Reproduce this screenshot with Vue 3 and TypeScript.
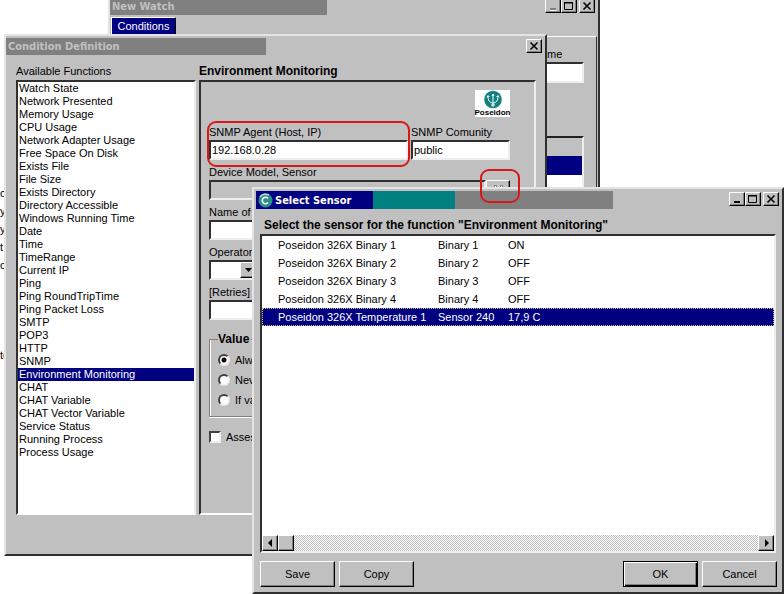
<script setup lang="ts">
import { ref } from 'vue'

interface Sensor {
  name: string
  short: string
  value: string
}

const functions: string[] = [
  'Watch State', 'Network Presented', 'Memory Usage', 'CPU Usage', 'Network Adapter Usage',
  'Free Space On Disk', 'Exists File', 'File Size', 'Exists Directory', 'Directory Accessible',
  'Windows Running Time', 'Date', 'Time', 'TimeRange', 'Current IP', 'Ping', 'Ping RoundTripTime',
  'Ping Packet Loss', 'SMTP', 'POP3', 'HTTP', 'SNMP', 'Environment Monitoring', 'CHAT',
  'CHAT Variable', 'CHAT Vector Variable', 'Service Status', 'Running Process', 'Process Usage',
]
const selectedFunction = ref('Environment Monitoring')

const sensors: Sensor[] = [
  { name: 'Poseidon 326X Binary 1', short: 'Binary 1', value: 'ON' },
  { name: 'Poseidon 326X Binary 2', short: 'Binary 2', value: 'OFF' },
  { name: 'Poseidon 326X Binary 3', short: 'Binary 3', value: 'OFF' },
  { name: 'Poseidon 326X Binary 4', short: 'Binary 4', value: 'OFF' },
  { name: 'Poseidon 326X Temperature 1', short: 'Sensor 240', value: '17,9 C' },
]
const selectedSensor = ref(4)

const agent = ref('192.168.0.28')
const community = ref('public')
const valueMode = ref('Always')
const valueModes: string[] = ['Always', 'Never', 'If value']
const backdrop: string[] = ['o', 'y', 'y', 't', 'c', '', '', '', '', 'te']
</script>

<template>
  <main class="desktop">
    <div class="backdrop">
      <span v-for="(line, i) in backdrop" :key="i">{{ line }}</span>
    </div>

    <section class="window watch">
      <header class="titlebar">
        <h2 class="caption inactive">New Watch</h2>
        <div class="sysbuttons">
          <button type="button" class="sys" aria-label="Minimize">
            <svg width="12" height="10" viewBox="0 0 12 10"><path d="M3 9.500h6" stroke="#fff" /><path d="M3 8h6" stroke="#808080" stroke-width="2" /></svg>
          </button>
          <button type="button" class="sys" aria-label="Maximize">
            <svg width="12" height="10" viewBox="0 0 12 10"><path d="M1.500 1.500h8v7h-8zM1 1.500h9M1 2h9" fill="none" stroke="#000" /></svg>
          </button>
          <button type="button" class="sys close" aria-label="Close">
            <svg width="12" height="10" viewBox="0 0 12 10"><path d="M2.500 1.500l7 7M9.500 1.500l-7 7" stroke="#000" stroke-width="1.600" /></svg>
          </button>
        </div>
      </header>
      <button type="button" class="tab">Conditions</button>
      <div class="page">
        <div class="page-column">
          <label for="watch-name">me</label>
          <input id="watch-name" class="edit" type="text" />
          <div class="mini-grid">
            <div class="mini-head"></div>
            <div class="mini-row"></div>
          </div>
        </div>
      </div>
    </section>

    <section class="window definition">
      <header class="titlebar">
        <h2 class="caption inactive">Condition Definition</h2>
        <div class="sysbuttons">
          <button type="button" class="sys close" aria-label="Close">
            <svg width="12" height="10" viewBox="0 0 12 10"><path d="M2.500 1.500l7 7M9.500 1.500l-7 7" stroke="#000" stroke-width="1.600" /></svg>
          </button>
        </div>
      </header>
      <div class="definition-body">
        <div class="column">
          <label for="functions">Available Functions</label>
          <select id="functions" v-model="selectedFunction" class="functions" size="29">
            <option v-for="name in functions" :key="name">{{ name }}</option>
          </select>
        </div>
        <div class="column">
          <h3 class="heading">Environment Monitoring</h3>
          <div class="panel">
            <div class="logo">
              <svg width="20" height="19" viewBox="0 0 20 19">
                <circle cx="10" cy="9.500" r="8.800" fill="#108080" />
                <path d="M10 4v13M5 6c0 4 1.500 7 5 7s5-3 5-7M4 7.500l1-2 1.500 1.500M13.500 7l1.500-1.500 1 2M9 6l1-2 1 2M8 15h4" fill="none" stroke="#fff" />
              </svg>
              <span>Poseidon</span>
            </div>
            <div class="field-row">
              <div class="field grow">
                <label for="agent">SNMP Agent (Host, IP)</label>
                <input id="agent" v-model="agent" class="edit" type="text" />
              </div>
              <div class="field community">
                <label for="community">SNMP Comunity</label>
                <input id="community" v-model="community" class="edit" type="text" />
              </div>
            </div>
            <div class="field">
              <label for="device">Device Model, Sensor</label>
              <div class="device-row">
                <input id="device" class="edit readonly" type="text" readonly />
                <button type="button" class="find" aria-label="Find sensor">
                  <svg width="14" height="12" viewBox="0 0 14 12">
                    <path d="M3.500 1.500h2v3h1v5h-4v-5h1zM9.500 1.500h2v3h1v5h-4v-5h1zM6 5.500h3" fill="#eee" stroke="#808080" />
                  </svg>
                </button>
              </div>
            </div>
            <div class="field">
              <label for="name">Name of</label>
              <input id="name" class="edit" type="text" />
            </div>
            <div class="field">
              <label for="operator">Operator</label>
              <div class="combo">
                <select id="operator" class="edit"></select>
                <span class="drop"><svg width="9" height="5" viewBox="0 0 9 5"><path d="M1 0h7L4.500 4z" /></svg></span>
              </div>
            </div>
            <div class="field">
              <label for="retries">[Retries]</label>
              <input id="retries" class="edit" type="text" />
            </div>
            <fieldset class="group">
              <legend>Value</legend>
              <label v-for="mode in valueModes" :key="mode" class="option">
                <input v-model="valueMode" type="radio" name="value-mode" :value="mode" />{{ mode }}
              </label>
            </fieldset>
            <label class="option assess"><input type="checkbox" />Assess</label>
          </div>
        </div>
      </div>
    </section>

    <section class="window sensor">
      <header class="titlebar">
        <div class="caption active">
          <svg width="15" height="15" viewBox="0 0 15 15">
            <circle cx="7.500" cy="7.500" r="7" fill="#2a9088" />
            <path d="M2 4a7 7 0 0 1 9-2" fill="none" stroke="#b8dcd8" stroke-width="1.500" />
            <path d="M10 5.500A3.200 3.200 0 1 0 10 9.500" fill="none" stroke="#fff" stroke-width="1.600" />
          </svg>
          <h2>Select Sensor</h2>
        </div>
        <div class="band teal"></div>
        <div class="band grey"></div>
        <div class="sysbuttons">
          <button type="button" class="sys" aria-label="Minimize">
            <svg width="12" height="10" viewBox="0 0 12 10"><path d="M3 8h6" stroke="#000" stroke-width="2" /></svg>
          </button>
          <button type="button" class="sys" aria-label="Maximize">
            <svg width="12" height="10" viewBox="0 0 12 10"><path d="M1.500 1.500h8v7h-8zM1 1.500h9M1 2h9" fill="none" stroke="#000" /></svg>
          </button>
          <button type="button" class="sys close" aria-label="Close">
            <svg width="12" height="10" viewBox="0 0 12 10"><path d="M2.500 1.500l7 7M9.500 1.500l-7 7" stroke="#000" stroke-width="1.600" /></svg>
          </button>
        </div>
      </header>
      <h3 class="heading prompt">Select the sensor for the function "Environment Monitoring"</h3>
      <div class="sensor-list">
        <div class="rows">
          <table>
            <tbody>
              <tr
                v-for="(sensor, i) in sensors"
                :key="sensor.name"
                :class="{ selected: i === selectedSensor }"
                @click="selectedSensor = i"
              >
                <td class="c-name">{{ sensor.name }}</td>
                <td class="c-short">{{ sensor.short }}</td>
                <td>{{ sensor.value }}</td>
              </tr>
            </tbody>
          </table>
        </div>
        <div class="scrollbar">
          <button type="button" class="scroll" aria-label="Scroll left">
            <svg width="5" height="8" viewBox="0 0 5 8"><path d="M4 0v8L0 4z" /></svg>
          </button>
          <div class="thumb"></div>
          <button type="button" class="scroll end" aria-label="Scroll right">
            <svg width="5" height="8" viewBox="0 0 5 8"><path d="M1 0v8l4-4z" /></svg>
          </button>
        </div>
      </div>
      <footer class="actions">
        <button type="button" class="push">Save</button>
        <button type="button" class="push">Copy</button>
        <button type="button" class="push default">OK</button>
        <button type="button" class="push">Cancel</button>
      </footer>
    </section>

    <div class="ring agent-ring"></div>
    <div class="ring find-ring"></div>
  </main>
</template>

<style>
body {
  background: #fff;
}
</style>

<style scoped>
.desktop,
.desktop * {
  box-sizing: border-box;
}
.desktop {
  position: relative;
  min-height: 100vh;
  overflow: hidden;
  font: 11px/16px "Liberation Sans", Arial, sans-serif;
  color: #000;
}
button,
input,
select {
  margin: 0;
  padding: 0;
  border-radius: 0;
  font: inherit;
  color: inherit;
  appearance: none;
  outline: none;
}
svg {
  display: block;
}
h2,
h3 {
  margin: 0;
  font-size: 11px;
}
.backdrop {
  display: flex;
  flex-direction: column;
  align-items: flex-start;
  padding-top: 184px;
}
.backdrop span {
  height: 18px;
  line-height: 18px;
}
.window {
  position: absolute;
  display: flex;
  flex-direction: column;
  background: #c0c0c0;
  border: 2px solid;
  border-color: #e4e4e4 #303030 #303030 #e4e4e4;
}
.watch {
  left: 108px;
  top: -4px;
  width: 492px;
}
.definition {
  left: 4px;
  top: 34px;
  width: 543px;
  padding-top: 2px;
}
.sensor {
  left: 252px;
  right: 0;
  top: 187px;
  padding: 2px 2px 5px 2px;
}
.titlebar {
  display: flex;
  height: 18px;
}
.caption {
  padding-left: 2px;
  font: bold 11px/17px "DejaVu Sans Condensed", "DejaVu Sans", sans-serif;
}
.inactive {
  height: 17px;
  color: #c0c0c0;
  background: #808080;
}
.watch .inactive {
  width: 217px;
}
.definition .inactive {
  width: 260px;
}
.active {
  display: flex;
  align-items: center;
  gap: 2px;
  width: 117px;
  padding-left: 2px;
  background: #000080;
  color: #fff;
}
.active h2 {
  white-space: nowrap;
}
.band.teal {
  width: 82px;
  background: #008080;
}
.band.grey {
  width: 158px;
  background: #808080;
}
.sysbuttons {
  display: flex;
  margin-left: auto;
  padding: 1px 3px 0 0;
}
.sensor .sysbuttons {
  padding-right: 1px;
}
.sys {
  display: grid;
  place-items: center;
  width: 16px;
  height: 14px;
}
.sys.close {
  margin-left: 2px;
}
.sys,
.find,
.drop,
.scroll,
.thumb,
.push {
  background: #c0c0c0;
  border: 1px solid;
  border-color: #fff #000 #000 #fff;
  box-shadow: inset -1px -1px #808080;
}
.tab {
  align-self: flex-start;
  width: 65px;
  height: 18px;
  margin: 1px 0 0 1px;
  color: #fff;
  background: #000080;
  border: 1px solid;
  border-color: #fff #000 #000080 #fff;
}
.page {
  display: flex;
  justify-content: flex-end;
  min-height: 380px;
  margin: 1px 1px 0 1px;
  padding: 9px 12px 0 0;
  border: 1px solid;
  border-color: #fff #303030 #303030 #fff;
}
.page-column {
  display: flex;
  flex-direction: column;
  width: 40px;
}
.page-column label {
  padding-left: 3px;
}
.page-column .edit {
  height: 21px;
}
.mini-grid {
  height: 100px;
  margin-top: 53px;
  border: 2px solid;
  border-color: #202020 #eee #eee #202020;
  background: #fff;
}
.mini-head {
  height: 18px;
  background: #c0c0c0;
}
.mini-row {
  height: 19px;
  background: #000080;
}
.definition-body {
  display: grid;
  grid-template-columns: 180px 1fr;
  column-gap: 3px;
  padding: 7px 9px 39px 10px;
}
.column {
  display: flex;
  flex-direction: column;
  gap: 1px;
}
.heading {
  font-size: 12px;
  line-height: 16px;
}
.functions,
.panel {
  height: 435px;
  border: 2px solid;
  border-color: #303030 #eee #fff #303030;
}
.functions {
  padding: 0;
  overflow: hidden;
  background: #fff;
}
.functions option {
  height: 13px;
  min-height: 13px;
  padding: 0 1px;
  line-height: 13px;
}
.functions option:checked {
  background: #000080 linear-gradient(#000080, #000080);
  -webkit-text-fill-color: #fff;
}
.panel {
  display: flex;
  flex-direction: column;
  align-items: stretch;
  padding: 8px 24px 0 8px;
}
.logo {
  display: flex;
  flex-direction: column;
  align-items: center;
  align-self: flex-end;
  width: 35px;
  height: 27px;
  margin-bottom: 7px;
  background: #fff;
  font: bold 8px/8px "Liberation Sans Narrow", "Liberation Sans", sans-serif;
}
.field-row {
  display: flex;
  gap: 3px;
}
.field {
  display: flex;
  flex-direction: column;
  height: 40px;
}
.grow {
  flex: 1;
}
.community {
  width: 99px;
}
.edit {
  width: 100%;
  height: 20px;
  padding: 0 1px 1px;
  background: #fff;
  border: 2px solid;
  border-color: #303030 #eee #eee #303030;
}
.edit.readonly {
  flex: 1;
  width: auto;
  background: #c0c0c0;
}
.device-row {
  display: flex;
}
.find {
  display: grid;
  place-items: center;
  width: 24px;
  height: 20px;
}
.combo {
  display: grid;
  width: 49px;
}
.combo > * {
  grid-area: 1 / 1;
}
.drop {
  display: grid;
  place-items: center;
  place-self: center end;
  width: 16px;
  height: 16px;
  margin-right: 2px;
  pointer-events: none;
}
.group {
  display: flex;
  flex-direction: column;
  gap: 4px;
  height: 86px;
  margin: 7px 0 0;
  padding: 5px 8px 0;
  border: 1px solid #808080;
  box-shadow: inset 1px 0 #fff, 0 1px #fff;
}
.group legend {
  padding: 0 2px 0 0;
  font-size: 12px;
  font-weight: bold;
}
.option {
  display: flex;
  align-items: center;
  gap: 5px;
  height: 16px;
}
.option input {
  width: 12px;
  height: 12px;
  background: #fff;
  border: 2px solid;
  border-color: #404040 #eee #eee #404040;
}
.option input[type="radio"] {
  border-radius: 50%;
}
.option input[type="radio"]:checked {
  background: radial-gradient(circle, #000 2px, #fff 3px);
}
.assess {
  margin-top: 12px;
}
.prompt {
  margin: 8px 0 1px 8px;
}
.sensor-list {
  display: flex;
  flex-direction: column;
  margin: 0 4px;
  background: #fff;
  border: 2px solid;
  border-color: #303030 #eee #eee #303030;
}
.rows {
  height: 299px;
}
table {
  width: 100%;
  border-collapse: collapse;
}
td {
  height: 18px;
  padding: 0;
  line-height: 16px;
}
.c-name {
  width: 176px;
  padding-left: 16px;
}
.c-short {
  width: 70px;
}
.selected {
  color: #fff;
  background: #000080;
  outline: 1px dotted #c0c080;
  outline-offset: -1px;
}
.scrollbar {
  display: flex;
  height: 16px;
  background: conic-gradient(#c0c0c0 25%, #fff 0 50%, #c0c0c0 0 75%, #fff 0) 0 0 / 2px 2px;
}
.scroll,
.thumb {
  display: grid;
  place-items: center;
  width: 16px;
  height: 16px;
}
.end {
  margin-left: auto;
}
.actions {
  display: flex;
  gap: 4px;
  margin: 8px 3px 0 4px;
}
.push {
  width: 75px;
  height: 26px;
}
.push.default {
  margin-left: auto;
  border-color: #000;
  box-shadow: inset 1px 1px #fff, inset -1px -1px #000, inset -2px -2px #808080;
}
.ring {
  position: absolute;
  border: 2px solid #d81818;
  border-radius: 9px;
  pointer-events: none;
}
.agent-ring {
  left: 207px;
  top: 121px;
  width: 203px;
  height: 46px;
}
.find-ring {
  left: 480px;
  top: 169px;
  width: 40px;
  height: 34px;
}
</style>
